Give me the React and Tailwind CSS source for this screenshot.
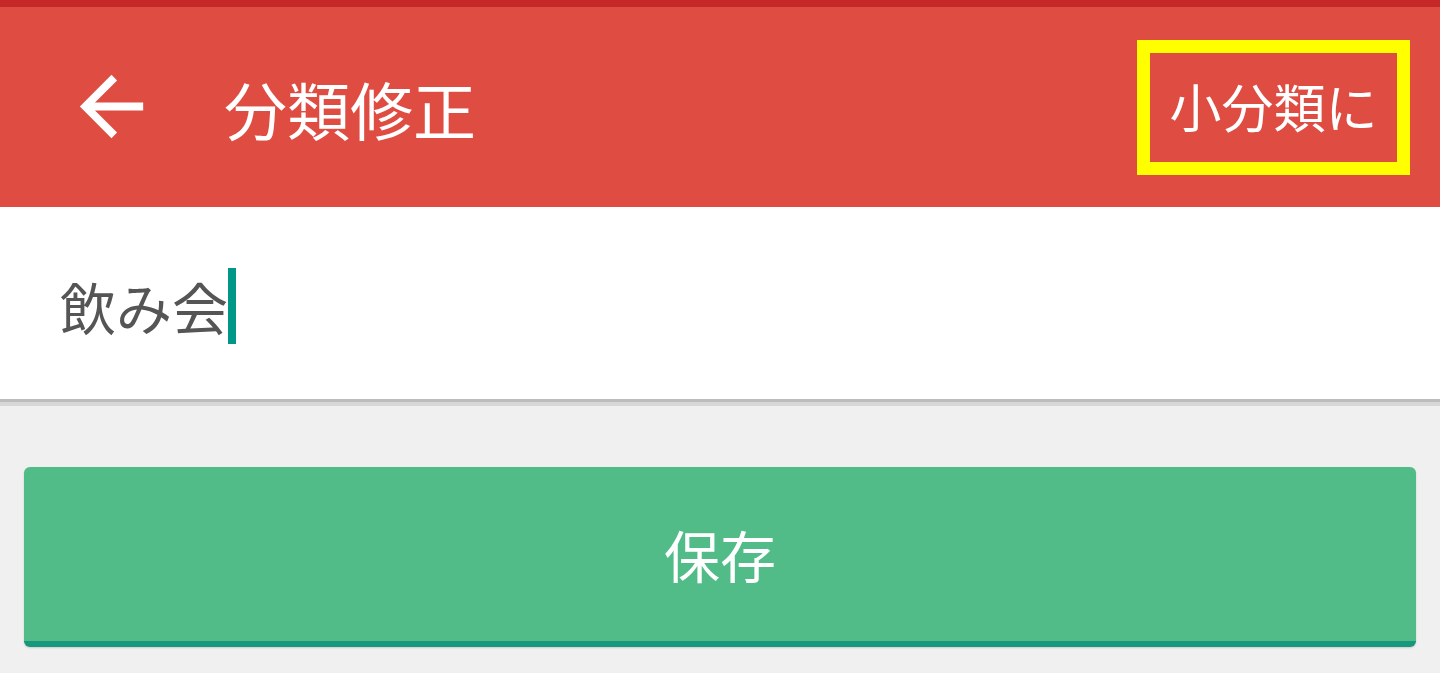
import React from "react";

const font = { fontFamily: '"Noto Sans CJK JP", "Noto Sans", sans-serif' };

const BackArrow = () => (
  <svg viewBox="0 0 24 24" className="w-[95px] h-[95px] fill-white">
    <path d="M20 11H7.83l5.59-5.59L12 4l-8 8 8 8 1.41-1.41L7.83 13H20v-2z" />
  </svg>
);

const App = () => {
  return (
    <div className="w-[1440px] h-[673px] bg-[#f0f0f0] overflow-hidden" style={font}>
      <header className="h-[207px] border-t-[7px] border-[#c62828] bg-[#df4c42] flex items-center">
        <div className="ml-[64px] mt-[-1px]">
          <BackArrow />
        </div>
        <h1 className="ml-[65px] text-[63px] leading-none text-white">分類修正</h1>
        <div className="ml-auto mr-[30px] w-[273px] h-[135px] border-[13px] border-[#ffff00] flex items-center justify-center">
          <span className="text-[52px] leading-none text-white mt-[-2px]">小分類に</span>
        </div>
      </header>

      <div className="bg-white h-[192px] flex items-center pl-[60px]">
        <span className="text-[56px] leading-none text-[#555555] mt-[6px]">飲み会</span>
        <span className="mt-[6px] w-[8px] h-[76px] bg-[#009688]" />
      </div>
      <div className="h-[3px] bg-[#bdbdbd]" />
      <div className="h-[4px] bg-[#d7d7d7]" />

      <div className="px-[24px] pt-[61px]">
        <button className="w-full h-[180px] rounded-[6px] bg-[#52bc89] border-b-[6px] border-[#17977c] shadow-[0_1px_2px_rgba(0,0,0,0.15)] flex items-center justify-center">
          <span className="text-[56px] leading-none text-white mt-[0px]">保存</span>
        </button>
      </div>
    </div>
  );
};

export default App;
